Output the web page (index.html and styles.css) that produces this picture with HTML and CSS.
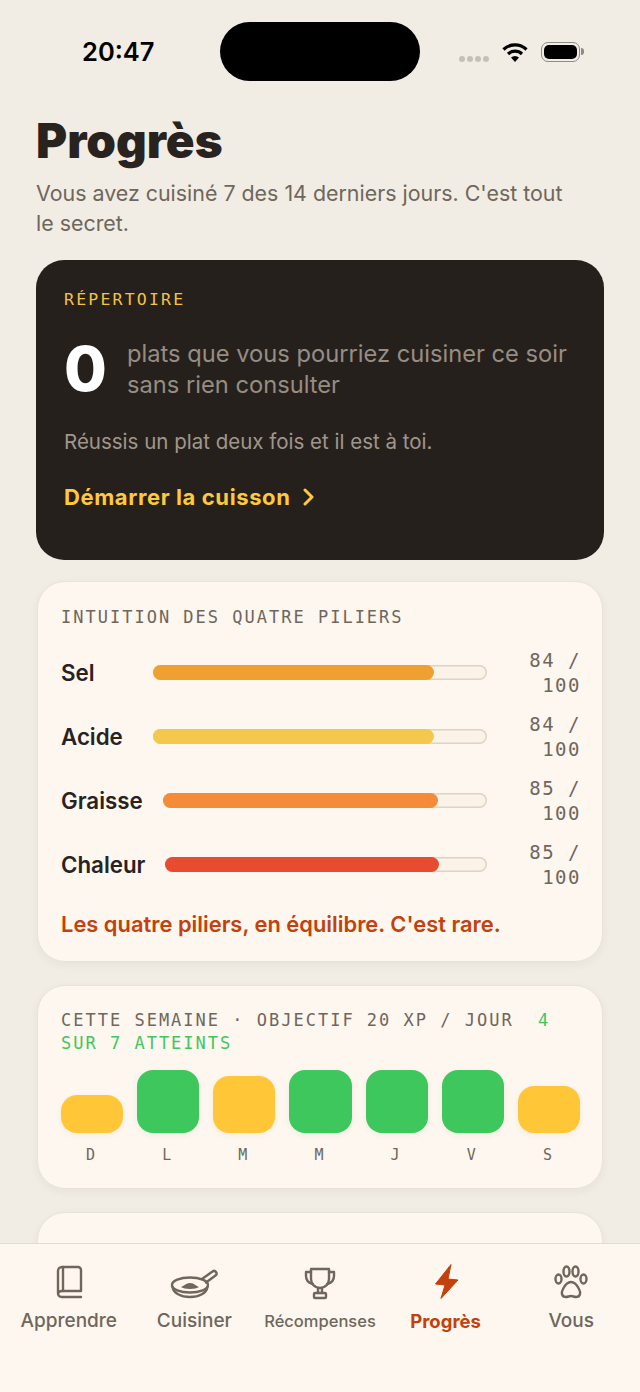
FILE: index.html
```html
<!DOCTYPE html>
<html lang="fr">
<head>
    <meta charset="UTF-8">
    <meta name="viewport" content="width=device-width, initial-scale=1.0">
    <title>Progrès</title>
    <link rel="stylesheet" href="styles.css">
</head>
<body>
    <div class="phone">
        <div class="status-bar">
            <span class="time">20:47</span>
            <span class="island"></span>
            <div class="status-icons">
                <span class="signal"><i></i><i></i><i></i><i></i></span>
                <svg width="28" height="22" viewBox="0 0 28 22">
                    <path class="wifi-arc" d="M2.5 8.5a16.5 16.5 0 0 1 23 0"/>
                    <path class="wifi-arc" d="M7 13a10 10 0 0 1 14 0"/>
                    <path d="M10 16.5a6 6 0 0 1 8 0l-4 4.5z"/>
                </svg>
                <span class="battery"><i></i></span>
            </div>
        </div>

        <main class="content">
            <h1>Progrès</h1>
            <p class="subtitle">Vous avez cuisiné 7 des 14 derniers jours. C'est tout le secret.</p>

            <section class="hero">
                <div class="hero-label">RÉPERTOIRE</div>
                <div class="hero-count">
                    <span class="big-number">0</span>
                    <span class="hero-text">plats que vous pourriez cuisiner ce soir sans rien consulter</span>
                </div>
                <p class="hero-note">Réussis un plat deux fois et il est à toi.</p>
                <a class="hero-link" href="#">Démarrer la cuisson
                    <svg width="14" height="18" viewBox="0 0 14 18"><path d="M3 2l7 7-7 7"/></svg>
                </a>
            </section>

            <section class="card">
                <div class="card-title">INTUITION DES QUATRE PILIERS</div>
                <div class="pillars">
                    <div class="pillar">
                        <span class="pillar-name">Sel</span>
                        <div class="track"><div class="fill fill-salt" style="width: 84%"></div></div>
                        <span class="pillar-value">84 / 100</span>
                    </div>
                    <div class="pillar">
                        <span class="pillar-name">Acide</span>
                        <div class="track"><div class="fill fill-acid" style="width: 84%"></div></div>
                        <span class="pillar-value">84 / 100</span>
                    </div>
                    <div class="pillar">
                        <span class="pillar-name">Graisse</span>
                        <div class="track"><div class="fill fill-fat" style="width: 85%"></div></div>
                        <span class="pillar-value">85 / 100</span>
                    </div>
                    <div class="pillar">
                        <span class="pillar-name">Chaleur</span>
                        <div class="track"><div class="fill fill-heat" style="width: 85%"></div></div>
                        <span class="pillar-value">85 / 100</span>
                    </div>
                </div>
                <p class="pillar-note">Les quatre piliers, en équilibre. C'est rare.</p>
            </section>

            <section class="card week-card">
                <div class="card-title week-title">CETTE SEMAINE · OBJECTIF 20 XP / JOUR <span class="week-count week-first">4</span><br><span class="week-count">SUR 7 ATTEINTS</span></div>
                <div class="week">
                    <div class="day"><div class="pill amber" style="height: 38px"></div><span>D</span></div>
                    <div class="day"><div class="pill green" style="height: 63px"></div><span>L</span></div>
                    <div class="day"><div class="pill amber" style="height: 57px"></div><span>M</span></div>
                    <div class="day"><div class="pill green" style="height: 63px"></div><span>M</span></div>
                    <div class="day"><div class="pill green" style="height: 63px"></div><span>J</span></div>
                    <div class="day"><div class="pill green" style="height: 63px"></div><span>V</span></div>
                    <div class="day"><div class="pill amber" style="height: 47px"></div><span>S</span></div>
                </div>
            </section>

            <section class="card next-card"></section>
        </main>

        <nav class="tabs">
            <a class="tab" href="#">
                <svg class="icon" width="48" height="40" viewBox="0 0 48 40">
                    <path d="M13 31V9a4 4 0 0 1 4-4h16a3 3 0 0 1 3 3v21H17a4 4 0 0 0-4 2.500a3.500 3.500 0 0 0 3.500 3.500H36"/>
                    <path d="M18 5v24"/>
                </svg>
                <span>Apprendre</span>
            </a>
            <a class="tab" href="#">
                <svg class="icon" width="48" height="40" viewBox="0 0 48 40">
                    <ellipse cx="20" cy="23" rx="18" ry="7.500"/>
                    <path d="M2.500 25c1 6 8 10 17.500 10s16.500-4 17.500-10"/>
                    <path class="solid" d="M11 25c3-1 5-4 9-4s6 3 9 4c-3 2.500-15 2.500-18 0z"/>
                    <path d="M32 17l10.500-7.500a2.500 2.500 0 0 1 3 4L36 20.500"/>
                </svg>
                <span>Cuisiner</span>
            </a>
            <a class="tab" href="#">
                <svg class="icon" width="48" height="40" viewBox="0 0 48 40">
                    <path d="M15 7h18v10a9 9 0 0 1-18 0z"/>
                    <path d="M15 10h-5v4c0 4 3 7 6.500 8"/>
                    <path d="M33 10h5v4c0 4-3 7-6.500 8"/>
                    <path d="M22 26v5M26 26v5"/>
                    <rect x="18" y="31" width="12" height="5" rx="1"/>
                </svg>
                <span class="tab-small">Récompenses</span>
            </a>
            <a class="tab tab-active" href="#">
                <svg class="bolt" width="48" height="40" viewBox="0 0 48 40">
                    <path d="M29 2.500L13.500 22l9.500 1-4 13.500L36 18l-10-1z"/>
                </svg>
                <span>Progrès</span>
            </a>
            <a class="tab" href="#">
                <svg class="icon" width="48" height="40" viewBox="0 0 48 40">
                    <ellipse cx="11.500" cy="17" rx="3" ry="4.500"/>
                    <ellipse cx="19.500" cy="9.500" rx="3" ry="5"/>
                    <ellipse cx="28.500" cy="9.500" rx="3" ry="5"/>
                    <ellipse cx="36.500" cy="17" rx="3" ry="4.500"/>
                    <path d="M24 20c-4 0-6 3-8 7-2 3.500-1.500 8 3 8 2 0 3-1 5-1s3 1 5 1c4.500 0 5-4.500 3-8-2-4-4-7-8-7z"/>
                </svg>
                <span>Vous</span>
            </a>
        </nav>
    </div>
</body>
</html>
```

FILE: styles.css
```css
* {
    box-sizing: border-box;
}

body {
    margin: 0;
    font-family: Inter, "Open Sans", sans-serif;
    color: #28231f;
    background-color: #f1ede4;
}

.phone {
    width: 640px;
    height: 1392px;
    display: flex;
    flex-direction: column;
    overflow: hidden;
}

/* status bar */
.status-bar {
    flex: none;
    height: 106px;
    padding: 22px 56px 0 82px;
    display: flex;
    align-items: flex-start;
}

.time {
    width: 138px;
    margin-top: 14px;
    font-size: 25.500px;
    font-weight: 600;
    color: #000;
}

.island {
    width: 200px;
    height: 59px;
    border-radius: 30px;
    background-color: #000;
}

.status-icons {
    margin-left: 39px;
    margin-top: 19px;
    display: flex;
    align-items: flex-start;
    gap: 12px;
}

.signal {
    display: flex;
    gap: 2px;
    margin-top: 15px;
}

.signal i {
    width: 6px;
    height: 6px;
    border-radius: 50%;
    background-color: #c4c0b8;
}

.wifi-arc {
    fill: none;
    stroke: #000;
    stroke-width: 3.200;
}

.battery {
    position: relative;
    width: 39px;
    height: 20px;
    margin-top: 1px;
    padding: 2px;
    border: 1.500px solid #8f8a82;
    border-radius: 7px;
}

.battery::after {
    content: "";
    position: absolute;
    top: 5px;
    right: -5px;
    width: 3px;
    height: 7px;
    border-radius: 0 3px 3px 0;
    background-color: #8f8a82;
}

.battery i {
    display: block;
    height: 100%;
    border-radius: 5px;
    background-color: #000;
}

/* page content */
.content {
    flex: 1;
    min-height: 0;
    overflow: hidden;
    padding: 0 36px;
}

h1 {
    margin: 0;
    font-size: 47.500px;
    line-height: 70px;
    font-weight: 900;
}

.subtitle {
    max-width: 540px;
    margin: 2px 0 22px;
    font-size: 21.400px;
    line-height: 30px;
    color: #6f665c;
}

.hero {
    height: 300px;
    padding: 28px;
    border-radius: 28px;
    background-color: #26201c;
}

.hero-label {
    font-family: "DejaVu Sans Mono", monospace;
    font-size: 16.500px;
    line-height: 24px;
    letter-spacing: 2.200px;
    color: #f5c242;
}

.hero-count {
    margin-top: 21px;
    display: flex;
    align-items: flex-start;
    gap: 21px;
}

.big-number {
    width: 42px;
    font-size: 62px;
    line-height: 72px;
    font-weight: 800;
    color: #fff;
}

.hero-text {
    margin-top: 5px;
    font-size: 23.700px;
    line-height: 31px;
    color: #968d83;
}

.hero-note {
    margin: 22px 0 0;
    font-size: 20.500px;
    line-height: 30px;
    color: #a0978c;
}

.hero-link {
    margin-top: 25px;
    display: flex;
    align-items: center;
    gap: 12px;
    font-size: 22px;
    line-height: 30px;
    font-weight: 700;
    letter-spacing: 0.600px;
    color: #ffc93c;
    text-decoration: none;
}

.hero-link svg path {
    fill: none;
    stroke: #ffc93c;
    stroke-width: 3;
    stroke-linecap: round;
    stroke-linejoin: round;
}

.card {
    margin: 21px 1px 0;
    padding: 24px 23px 22px;
    border: 1px solid #e9e2d7;
    border-radius: 28px;
    background-color: #fdf7ef;
    box-shadow: 0 3px 10px rgba(60, 45, 30, 0.05);
}

.card-title {
    font-family: "DejaVu Sans Mono", monospace;
    font-size: 17px;
    line-height: 23px;
    letter-spacing: 2px;
    color: #6f665c;
}

.pillars {
    margin-top: 18px;
    display: flex;
    flex-direction: column;
    gap: 14px;
}

.pillar {
    display: flex;
    align-items: center;
    gap: 20px;
}

.pillar-name {
    min-width: 72px;
    font-size: 22.300px;
    font-weight: 600;
}

.track {
    flex: 1;
    height: 15px;
    border-radius: 8px;
    background-color: #fbf3e8;
    box-shadow: inset 0 0 0 1.500px #ddd3c6;
}

.fill {
    height: 100%;
    border-radius: 8px;
}

.fill-salt { background-color: #f0a02e; }
.fill-acid { background-color: #f4c84a; }
.fill-fat { background-color: #f58b38; }
.fill-heat { background-color: #e84c30; }

.pillar-value {
    flex: none;
    width: 82px;
    margin: 1px -2px -1px -8px;
    font-family: "DejaVu Sans Mono", monospace;
    font-size: 19px;
    line-height: 25px;
    letter-spacing: 1.500px;
    text-align: right;
    color: #6f665c;
}

.pillar-note {
    margin: 20px 0 0;
    font-size: 21.900px;
    line-height: 30px;
    font-weight: 600;
    color: #c2410c;
}

.week-card {
    margin-top: 23px;
    padding-bottom: 23px;
}

.week-title {
    margin-top: -1px;
}

.week-count {
    color: #3ec75d;
}

.week-first {
    margin-left: 12px;
}

.week {
    margin: 15px -1px 0 0;
    display: grid;
    grid-template-columns: repeat(7, 1fr);
    gap: 14px;
    align-items: end;
}

.day {
    display: flex;
    flex-direction: column;
    align-items: center;
    gap: 12px;
    font-family: "DejaVu Sans Mono", monospace;
    font-size: 15px;
    line-height: 20px;
    color: #6f665c;
}

.day span {
    margin-right: 3px;
}

.pill {
    width: 100%;
    border-radius: 16px;
    box-shadow: 0 2px 6px rgba(60, 45, 30, 0.06);
}

.amber { background-color: #ffc737; }
.green { background-color: #3ec75d; }

.next-card {
    height: 120px;
    margin-top: 23px;
}

/* bottom tabs */
.tabs {
    flex: none;
    height: 149px;
    padding: 18px 6px 0;
    display: flex;
    border-top: 1px solid #e2dbd0;
    background-color: #fdf7ef;
}

.tab {
    flex: 1;
    display: flex;
    flex-direction: column;
    align-items: center;
    gap: 5px;
    font-size: 19px;
    line-height: 28px;
    font-weight: 500;
    color: #6f665c;
    text-decoration: none;
}

.tab span {
    white-space: nowrap;
}

.tab .tab-small {
    font-size: 16.500px;
}

.tab-active {
    font-size: 18.500px;
    font-weight: 700;
    color: #c2410c;
}

.icon * {
    fill: none;
    stroke: #6f665c;
    stroke-width: 2.400;
    stroke-linecap: round;
    stroke-linejoin: round;
}

.icon .solid {
    fill: #6f665c;
    stroke: none;
}

.bolt path {
    fill: #c2410c;
    stroke: #c2410c;
    stroke-width: 1;
    stroke-linejoin: round;
}
```
